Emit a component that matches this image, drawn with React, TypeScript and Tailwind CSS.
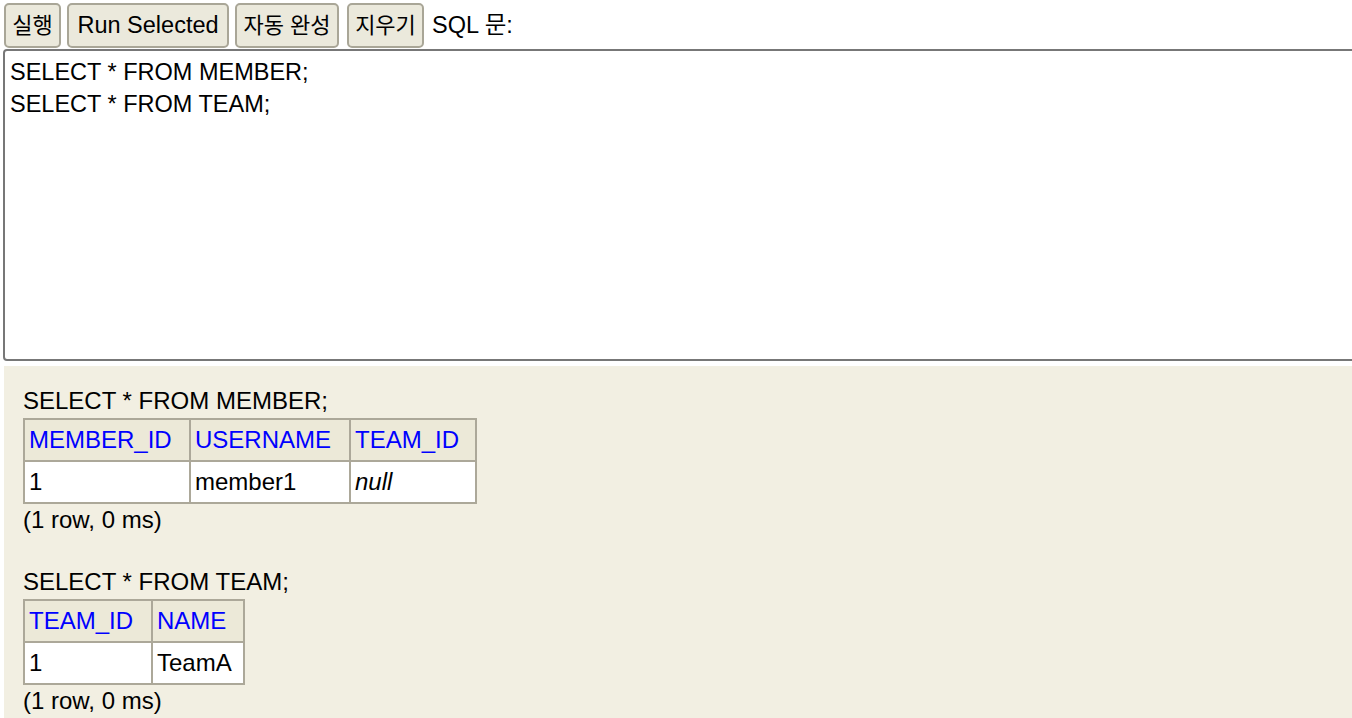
import React from 'react';

const font = { fontFamily: '"Liberation Sans", Arial, "Noto Sans CJK KR", sans-serif' };

function ToolButton({ label, width, korean }: { label: string; width: number; korean?: boolean }) {
  return (
    <button
      style={{ width }}
      className={
        'h-[45px] shrink-0 rounded-[5px] border-2 border-[#a9a697] bg-[#ebe9dc] text-black leading-none text-center ' +
        (korean ? 'text-[22px]' : 'text-[23.5px]')
      }
    >
      {label}
    </button>
  );
}

function ResultTable({
  sql,
  columns,
  rows,
}: {
  sql: string;
  columns: { name: string; width: number }[];
  rows: { value: string; italic?: boolean }[][];
}) {
  return (
    <div>
      <div className="leading-[28px]">{sql}</div>
      <table className="border-collapse mt-[3px]">
        <thead>
          <tr>
            {columns.map((c) => (
              <th
                key={c.name}
                style={{ width: c.width }}
                className="border-2 border-[#aca899] bg-[#ece9d8] text-[#0000ff] font-normal text-left pl-[4px] h-[42px] leading-[28px]"
              >
                {c.name}
              </th>
            ))}
          </tr>
        </thead>
        <tbody>
          {rows.map((r, i) => (
            <tr key={i}>
              {r.map((cell, j) => (
                <td
                  key={j}
                  className={
                    'border-2 border-[#aca899] bg-white pl-[4px] h-[42px] leading-[28px] ' +
                    (cell.italic ? 'italic' : '')
                  }
                >
                  {cell.value}
                </td>
              ))}
            </tr>
          ))}
        </tbody>
      </table>
      <div className="leading-[28px] mt-[2px]">(1 row, 0 ms)</div>
    </div>
  );
}

export default function App() {
  return (
    <div style={font} className="w-[1352px] h-[718px] overflow-hidden bg-white text-black">
      <div className="flex items-center pl-[4px] pt-[3px] h-[48px]">
        <ToolButton label="실행" width={57} korean />
        <div className="w-[6px]" />
        <ToolButton label="Run Selected" width={162} />
        <div className="w-[6px]" />
        <ToolButton label="자동 완성" width={104} korean />
        <div className="w-[8px]" />
        <ToolButton label="지우기" width={77} korean />
        <span className="text-[23.5px] ml-[8px]">SQL 문:</span>
      </div>
      <div className="ml-[3px] mt-[1px] w-[1370px] h-[312px] border-2 border-[#777777] rounded-[4px] bg-white px-[5px] pt-[5px] text-[23.5px] leading-[32px] whitespace-pre">
        {'SELECT * FROM MEMBER;\nSELECT * FROM TEAM;'}
      </div>
      <div className="ml-[4px] mt-[5px] h-[400px] bg-[#f2efe2] pl-[19px] pt-[21px] text-[24px]">
        <ResultTable
          sql="SELECT * FROM MEMBER;"
          columns={[
            { name: 'MEMBER_ID', width: 166 },
            { name: 'USERNAME', width: 160 },
            { name: 'TEAM_ID', width: 126 },
          ]}
          rows={[[{ value: '1' }, { value: 'member1' }, { value: 'null', italic: true }]]}
        />
        <div className="h-[34px]" />
        <ResultTable
          sql="SELECT * FROM TEAM;"
          columns={[
            { name: 'TEAM_ID', width: 128 },
            { name: 'NAME', width: 92 },
          ]}
          rows={[[{ value: '1' }, { value: 'TeamA' }]]}
        />
      </div>
    </div>
  );
}
